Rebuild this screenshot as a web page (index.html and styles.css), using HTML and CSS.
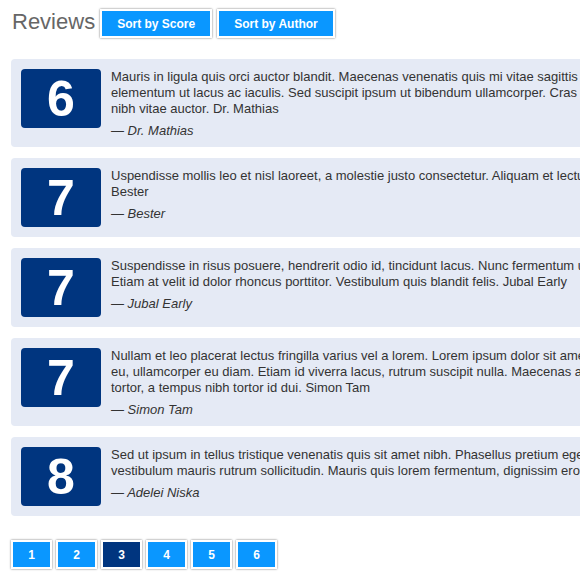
FILE: index.html
```html
<!DOCTYPE html>
<html lang="en">
<head>
<meta charset="utf-8">
<title>Reviews</title>
<link rel="stylesheet" href="styles.css">
</head>
<body>
<div class="page">
  <div class="header">
    <h1 class="title">Reviews</h1>
    <button class="btn" type="button">Sort by Score</button>
    <button class="btn" type="button">Sort by Author</button>
  </div>

  <div class="reviews">
    <div class="review">
      <div class="score">6</div>
      <div class="body">
        <p class="text">Mauris in ligula quis orci auctor blandit. Maecenas venenatis quis mi vitae sagittis luctus. Morbi at tortor vel elementum ut lacus ac iaculis. Sed suscipit ipsum ut bibendum ullamcorper. Cras sed tortor vitae dolor luctus, nibh vitae auctor. Dr. Mathias</p>
        <p class="author">— Dr. Mathias</p>
      </div>
    </div>
    <div class="review">
      <div class="score">7</div>
      <div class="body">
        <p class="text">Uspendisse mollis leo et nisl laoreet, a molestie justo consectetur. Aliquam et lectus nec, sed rutrum magna. Bester</p>
        <p class="author">— Bester</p>
      </div>
    </div>
    <div class="review">
      <div class="score">7</div>
      <div class="body">
        <p class="text">Suspendisse in risus posuere, hendrerit odio id, tincidunt lacus. Nunc fermentum ut, vel posuere sapien nec. Etiam at velit id dolor rhoncus porttitor. Vestibulum quis blandit felis. Jubal Early</p>
        <p class="author">— Jubal Early</p>
      </div>
    </div>
    <div class="review">
      <div class="score">7</div>
      <div class="body">
        <p class="text">Nullam et leo placerat lectus fringilla varius vel a lorem. Lorem ipsum dolor sit amet, consectetur adipiscing in eu, ullamcorper eu diam. Etiam id viverra lacus, rutrum suscipit nulla. Maecenas a sapien, sed porta magna tortor, a tempus nibh tortor id dui. Simon Tam</p>
        <p class="author">— Simon Tam</p>
      </div>
    </div>
    <div class="review">
      <div class="score">8</div>
      <div class="body">
        <p class="text">Sed ut ipsum in tellus tristique venenatis quis sit amet nibh. Phasellus pretium eget mi, non tincidunt augue vestibulum mauris rutrum sollicitudin. Mauris quis lorem fermentum, dignissim eros et porta. Adelei Niska</p>
        <p class="author">— Adelei Niska</p>
      </div>
    </div>
  </div>

  <div class="pager">
    <button class="btn page-btn" type="button">1</button>
    <button class="btn page-btn" type="button">2</button>
    <button class="btn page-btn is-active" type="button">3</button>
    <button class="btn page-btn" type="button">4</button>
    <button class="btn page-btn" type="button">5</button>
    <button class="btn page-btn" type="button">6</button>
  </div>
</div>
</body>
</html>
```

FILE: styles.css
```css
html, body {
  overflow: hidden;
}

body {
  margin: 0;
  background: #ffffff;
  font-family: "Liberation Sans", Arial, sans-serif;
  color: #333333;
}

.page {
  width: 750px;
  padding: 8px 0 20px 11px;
}

.header {
  display: flex;
  align-items: flex-start;
  gap: 5px;
}

.title {
  margin: 0 0 0 1px;
  font-size: 22px;
  line-height: 28px;
  font-weight: normal;
  color: #666666;
}

.btn {
  margin: 1px 0 0 0;
  height: 29px;
  padding: 0 15px;
  border: 2px solid #ffffff;
  background: #0a97ff;
  color: #ffffff;
  font-family: "Liberation Sans", Arial, sans-serif;
  font-size: 12px;
  font-weight: bold;
  box-shadow: 0 0 2px rgba(0, 0, 0, 0.55);
  cursor: pointer;
}

.reviews {
  display: flex;
  flex-direction: column;
  gap: 11px;
  margin-top: 21px;
}

.review {
  display: flex;
  align-items: flex-start;
  gap: 10px;
  padding: 10px;
  background: #e5eaf5;
  border-radius: 4px;
}

.score {
  flex: 0 0 80px;
  height: 59px;
  display: flex;
  align-items: center;
  justify-content: center;
  background: #00357f;
  border-radius: 4px;
  color: #ffffff;
  font-size: 50px;
  font-weight: bold;
}

.body {
  flex: 1;
  min-width: 0;
}

.text {
  margin: 0;
  font-size: 13px;
  line-height: 16px;
}

.author {
  margin: 6px 0 -2px 0;
  font-size: 13px;
  line-height: 16px;
  font-style: italic;
}

.pager {
  display: flex;
  gap: 4px;
  margin-top: 24px;
}

.page-btn {
  margin: 0;
  width: 41px;
  padding: 0;
}

.page-btn.is-active {
  background: #00357f;
}
```
